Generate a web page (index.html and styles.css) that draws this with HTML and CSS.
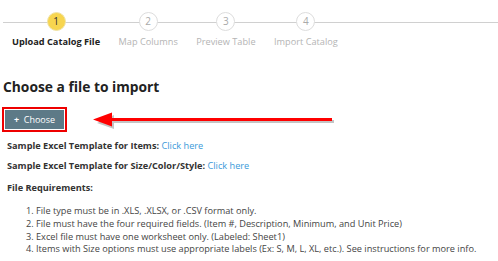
FILE: index.html
```html
<!DOCTYPE html>
<html lang="en">
  <head>
    <meta charset="UTF-8" />
    <title>Import Catalog</title>
    <link rel="stylesheet" href="styles.css">
  </head>
  <body>
    <div id="steps">
      <div class="step active">
        <span class="num">1</span>
        <span class="label">Upload Catalog File</span>
      </div>
      <div class="step">
        <span class="num">2</span>
        <span class="label">Map Columns</span>
      </div>
      <div class="step">
        <span class="num">3</span>
        <span class="label">Preview Table</span>
      </div>
      <div class="step">
        <span class="num">4</span>
        <span class="label">Import Catalog</span>
      </div>
    </div>

    <div id="content">
      <h1>Choose a file to import</h1>
      <div class="choose-row">
        <button type="button" class="choose"><b>+</b>&nbsp;&nbsp;Choose</button>
        <svg class="arrow" width="250" height="20" viewBox="0 0 250 20">
          <path d="M18 8 H240 V11 H18 Z M3 11 L20 3 L20 17 Z" fill="#c4c4c4" transform="translate(2,2)" />
          <path d="M18 8 H240 V11 H18 Z M1 9.5 L20 2.5 L20 16.5 Z" fill="#f00" />
        </svg>
      </div>
      <p class="sample">Sample Excel Template for Items: <a href="#">Click here</a></p>
      <p class="sample">Sample Excel Template for Size/Color/Style: <a href="#">Click here</a></p>
      <p class="sample reqs">File Requirements:</p>
      <ol>
        <li>File type must be in .XLS, .XLSX, or .CSV format only.</li>
        <li>File must have the four required fields. (Item #, Description, Minimum, and Unit Price)</li>
        <li>Excel file must have one worksheet only. (Labeled: Sheet1)</li>
        <li>Items with Size options must use appropriate labels (Ex: S, M, L, XL, etc.). See instructions for more info.</li>
      </ol>
    </div>
  </body>
</html>
```

FILE: styles.css
```css
body {
  margin: 0;
  background-color: #fff;
  font-family: "Open Sans", "Noto Sans", sans-serif;
  color: #333;
}
#steps {
  position: relative;
  display: flex;
  gap: 18.5px;
  padding: 12px 0 0 12px;
}
#steps::before {
  content: "";
  position: absolute;
  left: 3px;
  right: 0;
  top: 22px;
  height: 1px;
  background-color: #d0d0d0;
}
.step {
  position: relative;
  display: flex;
  flex-direction: column;
  align-items: center;
}
.num {
  width: 17px;
  height: 17px;
  border: 1px solid #ddd;
  border-radius: 50%;
  background-color: #fff;
  color: #aaa;
  font-size: 10px;
  line-height: 17px;
  text-align: center;
}
.label {
  margin-top: 3px;
  font-size: 9.2px;
  line-height: 15px;
  color: #b4b4b4;
  white-space: nowrap;
}
.step.active .num {
  background-color: #f7d54f;
  border-color: #f0e3a8;
  color: #333;
}
.step.active .label {
  color: #222;
  font-weight: 700;
}
#content {
  padding: 0 8px 0 3px;
}
h1 {
  margin: 28px 0 0 0;
  font-size: 13.8px;
  line-height: 20px;
  font-weight: 700;
  color: #222;
}
.choose-row {
  display: flex;
  align-items: center;
  height: 20px;
  margin-top: 12px;
}
.choose {
  margin-left: 2px;
  height: 19px;
  width: 59px;
  border: none;
  outline: 2px solid #e00;
  outline-offset: 1px;
  background-color: #5d7a87;
  color: #fff;
  font-family: "Open Sans", sans-serif;
  font-size: 9px;
  padding: 0;
  cursor: pointer;
}
.arrow {
  margin-left: 28px;
  margin-top: 1px;
}
.sample {
  margin: 0 0 6px 4px;
  font-size: 9.2px;
  line-height: 14px;
  font-weight: 700;
  color: #333;
}
.choose-row + .sample {
  margin-top: 10px;
}
.sample.reqs {
  margin-top: 8px;
}
.sample a {
  color: #3a9ad9;
  font-weight: 400;
  text-decoration: none;
}
ol {
  margin: 10px 0 0 0;
  padding-left: 33px;
  font-size: 9.2px;
  line-height: 12.8px;
  color: #444;
}
```
